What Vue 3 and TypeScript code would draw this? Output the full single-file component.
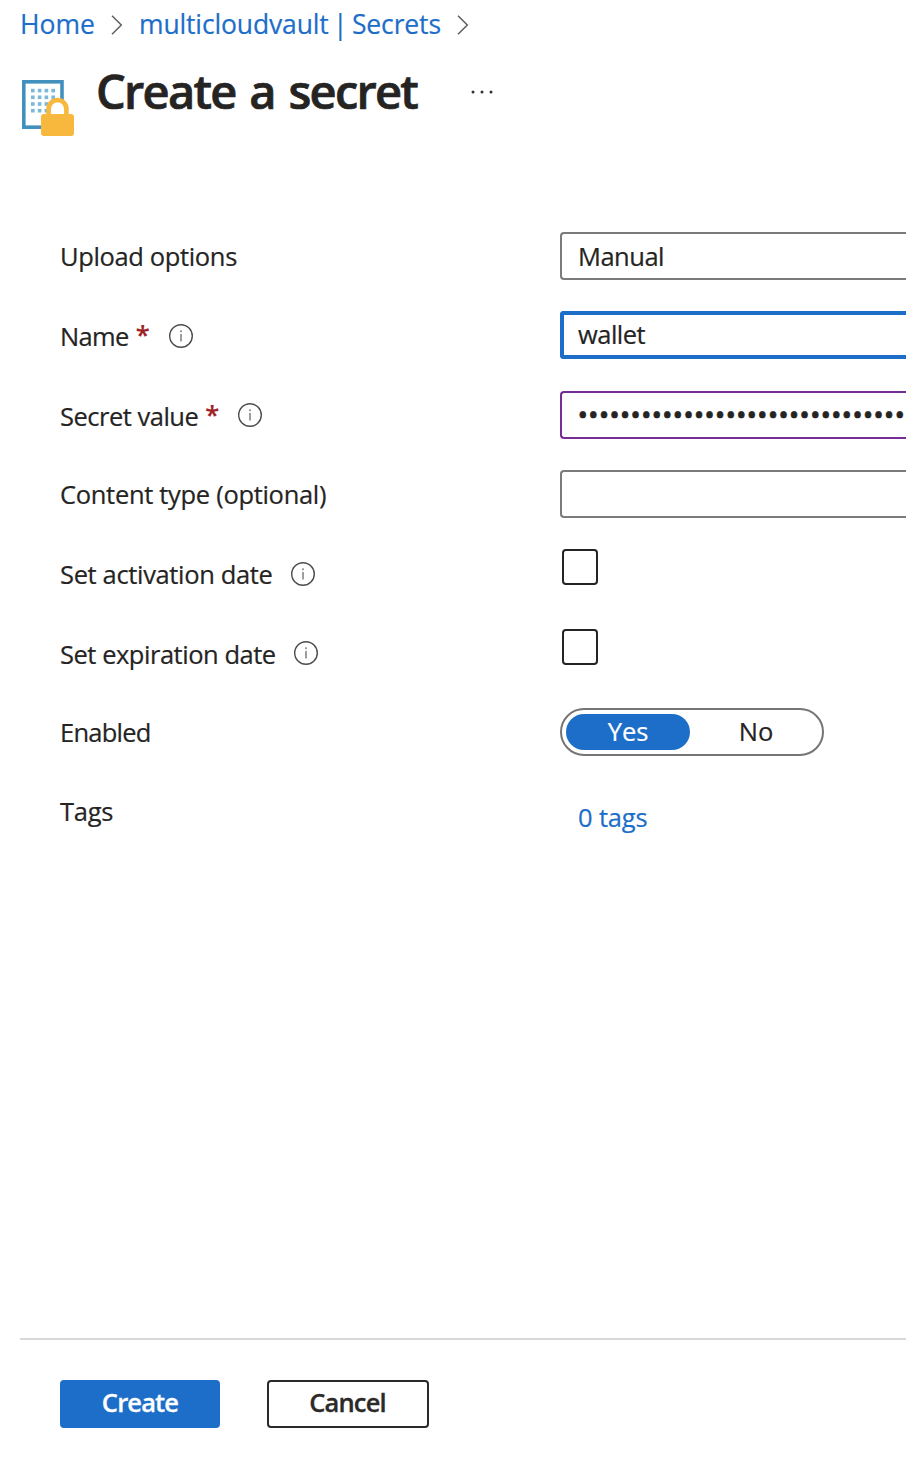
<script setup lang="ts">
interface Field {
  id: string
  label: string
  required?: boolean
  info?: boolean
  kind: 'input' | 'checkbox' | 'toggle' | 'tags'
  value?: string
}

const fields: Field[] = [
  { id: 'upload', label: 'Upload options', kind: 'input', value: 'Manual' },
  { id: 'name', label: 'Name', required: true, info: true, kind: 'input', value: 'wallet' },
  { id: 'secret', label: 'Secret value', required: true, info: true, kind: 'input', value: '•'.repeat(31) },
  { id: 'content', label: 'Content type (optional)', kind: 'input', value: '' },
  { id: 'activation', label: 'Set activation date', info: true, kind: 'checkbox' },
  { id: 'expiration', label: 'Set expiration date', info: true, kind: 'checkbox' },
  { id: 'enabled', label: 'Enabled', kind: 'toggle' },
  { id: 'tags', label: 'Tags', kind: 'tags', value: '0 tags' },
]
</script>

<template>
  <div class="page">
    <nav class="crumbs">
      <a class="home">Home</a>
      <svg class="chevron" width="12" height="20" viewBox="0 0 12 20"><path d="M1 .7 10.3 10 1 19.3" /></svg>
      <a class="vault">multicloudvault | Secrets</a>
      <svg class="chevron" width="12" height="20" viewBox="0 0 12 20"><path d="M1 .7 10.3 10 1 19.3" /></svg>
    </nav>

    <header class="head">
      <svg class="logo" width="52" height="57" viewBox="0 0 52 57">
        <rect x="1.8" y="1.8" width="38.2" height="45.4" fill="#fff" stroke="#4290bd" stroke-width="3.6" />
        <g fill="#7ab9da">
          <template v-for="r in 4" :key="r">
            <rect v-for="c in 4" :key="c" :x="9 + (c - 1) * 6.8" :y="8.8 + (r - 1) * 6.7" width="3.6" height="3.6" />
          </template>
        </g>
        <path d="M26.600 36V28.900a8.900 8.900 0 0 1 17.800 0V36" fill="#fff" stroke="#f8b73d" stroke-width="4.6" />
        <rect x="19" y="34" width="33" height="22" rx="3" fill="#f8b73d" />
      </svg>
      <h1>Create a secret</h1>
      <svg class="more" width="24" height="4" viewBox="0 0 24 4">
        <circle cx="3" cy="2" r="1.5" /><circle cx="12" cy="2" r="1.5" /><circle cx="21" cy="2" r="1.5" />
      </svg>
    </header>

    <main class="form">
      <div v-for="f in fields" :key="f.id" class="row" :class="f.id">
        <div class="label">
          <span class="text">{{ f.label }}</span>
          <span v-if="f.required" class="star">*</span>
          <svg v-if="f.info" class="info" width="26" height="26" viewBox="0 0 26 26">
            <circle cx="13" cy="13" r="11.3" />
            <path d="M13 11v7.500M13 7.300v2" />
          </svg>
        </div>
        <div v-if="f.kind === 'input'" class="input"><span class="value">{{ f.value }}</span></div>
        <div v-else-if="f.kind === 'checkbox'" class="box"></div>
        <div v-else-if="f.kind === 'toggle'" class="toggle">
          <span class="on">Yes</span>
          <span class="off">No</span>
        </div>
        <a v-else class="link">{{ f.value }}</a>
      </div>
    </main>

    <footer class="foot">
      <button class="create">Create</button>
      <button class="cancel">Cancel</button>
    </footer>
  </div>
</template>

<style>
body {
  margin: 0;
  background: #fff;
}
</style>

<style scoped>
.page {
  box-sizing: border-box;
  width: 906px;
  height: 1464px;
  overflow: hidden;
  display: flex;
  flex-direction: column;
  color: #252423;
  font: 25.5px/48px "Open Sans", "Noto Sans", sans-serif;
  white-space: nowrap;
  -webkit-text-stroke: 0.2px;
}
a { color: #1d6ec9; }
.crumbs {
  display: flex;
  align-items: center;
  height: 48px;
  padding-left: 20px;
  font-size: 26.5px;
}
.chevron { fill: none; stroke: #605e5c; stroke-width: 1.5; flex: none; margin-top: 2px; }
.home { width: 91px; }
.vault { width: 318px; margin-left: 16px; letter-spacing: -0.14px; word-spacing: -2.3px; }
.head {
  display: flex;
  height: 184px;
  padding-left: 22px;
}
.logo { margin-top: 32px; flex: none; }
h1 {
  margin: 11px 0 0 22px;
  width: 374px;
  font-size: 47px;
  line-height: 64px;
  font-weight: 600;
  letter-spacing: -1.75px;
  word-spacing: 3.2px;
  -webkit-text-stroke: 0.7px;
}
.more { margin-top: 42px; fill: #323130; }
.form {
  display: grid;
  grid-template-rows: 79px 80px 79px 79px 80px 79px 79px 60px;
  padding-left: 60px;
}
.row { display: grid; grid-template-columns: 500px 1fr; align-items: start; }
.label { display: flex; height: 48px; }
.name .label, .secret .label, .activation .label, .expiration .label { padding-top: 1px; }
.upload .text { letter-spacing: -0.36px; }
.name .text { letter-spacing: -0.65px; }
.secret .text { letter-spacing: -0.5px; }
.content .text { letter-spacing: -0.31px; }
.activation .text { letter-spacing: -0.35px; }
.expiration .text { letter-spacing: -0.47px; }
.enabled .text { letter-spacing: -0.75px; }
.tags .text { letter-spacing: -0.25px; }
.star { color: #9b2226; margin: -2px 0 0 7px; width: 14px; font-weight: 600; }
.info { fill: none; stroke: #4d4b49; stroke-width: 1.4; margin: 11px 0 0 17px; }
.info path { stroke: #777573; }
.name .info { margin-left: 18.5px; }
.secret .info { margin: 10px 0 0 18px; }
.expiration .info { margin-top: 10px; }
.input {
  box-sizing: border-box;
  height: 48px;
  width: 346px;
  border: 2px solid #7c7b7a;
  border-right: 0;
  border-radius: 4px 0 0 4px;
  padding-left: 16px;
  line-height: 44px;
  letter-spacing: -0.5px;
}
.name .input { border: 4px solid #1d6ec9; border-right: 0; padding-left: 14px; line-height: 39px; }
.secret .input {
  border-color: #752e94;
  padding-left: 15.5px;
  font-size: 28.1px;
  line-height: 42px;
  letter-spacing: 0;
  -webkit-text-stroke: 0.7px;
}
.box {
  box-sizing: border-box;
  width: 36px;
  height: 36px;
  margin: 0 0 0 2px;
  border: 2px solid #252423;
  border-radius: 4px;
}
.toggle {
  box-sizing: border-box;
  display: flex;
  width: 264px;
  height: 48px;
  padding: 4px;
  border: 2px solid #777574;
  border-radius: 24px;
  line-height: 35px;
  text-align: center;
}
.on { width: 124px; height: 36px; border-radius: 18px; background: #1d6ec9; color: #fff; }
.off { flex: 1; padding-left: 4px; }
.link { margin: 6px 0 0 18px; letter-spacing: -0.15px; }
.foot {
  box-sizing: border-box;
  display: flex;
  gap: 47px;
  margin: auto 0 0 20px;
  height: 126px;
  padding: 40px 0 0 40px;
  border-top: 2px solid #d9d9d9;
}
button {
  box-sizing: border-box;
  height: 48px;
  padding: 0 0 3px;
  border: 2px solid #1d6ec9;
  border-radius: 4px;
  background: #1d6ec9;
  color: #fff;
  font: 600 25.5px/41px "Open Sans", "Noto Sans", sans-serif;
  letter-spacing: -0.85px;
  -webkit-text-stroke: 0.3px;
}
.create { width: 160px; }
.cancel { width: 162px; background: #fff; border-color: #2b2a29; color: #2b2a29; padding-right: 1px; }
</style>
